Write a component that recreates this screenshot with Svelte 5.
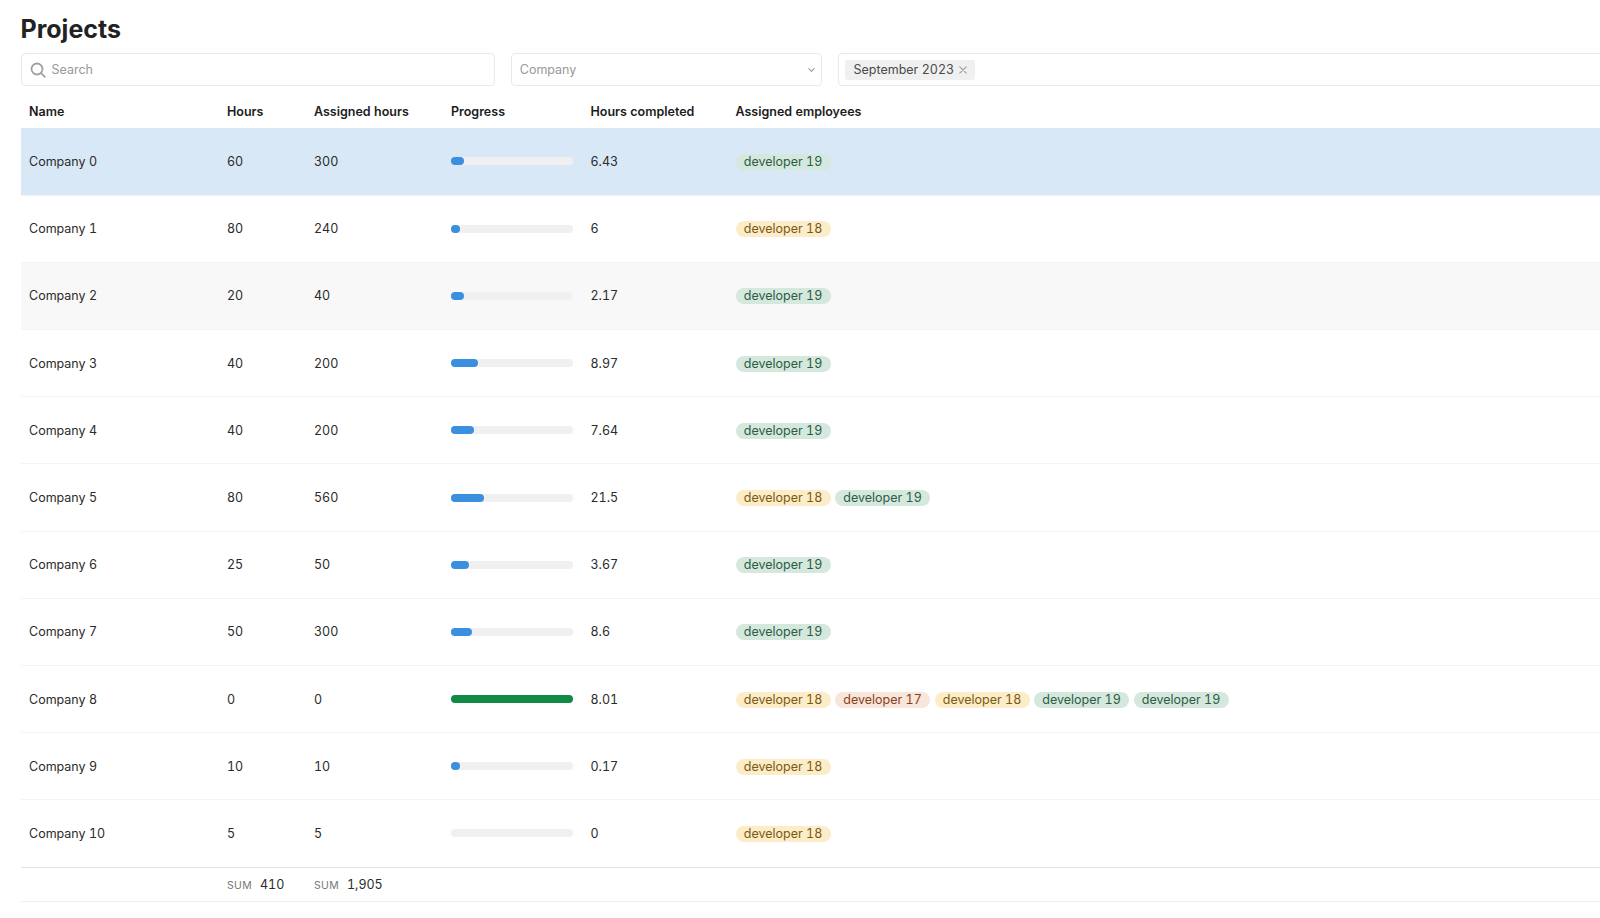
<script lang="ts">
  type Dev = { name: string; tone: "green" | "yellow" | "red" };

  const d19: Dev = { name: "developer 19", tone: "green" };
  const d18: Dev = { name: "developer 18", tone: "yellow" };
  const d17: Dev = { name: "developer 17", tone: "red" };

  const rows = [
    { name: "Company 0", hours: 60, assigned: 300, done: 6.43, devs: [d19] },
    { name: "Company 1", hours: 80, assigned: 240, done: 6, devs: [d18] },
    { name: "Company 2", hours: 20, assigned: 40, done: 2.17, devs: [d19] },
    { name: "Company 3", hours: 40, assigned: 200, done: 8.97, devs: [d19] },
    { name: "Company 4", hours: 40, assigned: 200, done: 7.64, devs: [d19] },
    { name: "Company 5", hours: 80, assigned: 560, done: 21.5, devs: [d18, d19] },
    { name: "Company 6", hours: 25, assigned: 50, done: 3.67, devs: [d19] },
    { name: "Company 7", hours: 50, assigned: 300, done: 8.6, devs: [d19] },
    { name: "Company 8", hours: 0, assigned: 0, done: 8.01, devs: [d18, d17, d18, d19, d19] },
    { name: "Company 9", hours: 10, assigned: 10, done: 0.17, devs: [d18] },
    { name: "Company 10", hours: 5, assigned: 5, done: 0, devs: [d18] },
  ];

  function pct(r: { hours: number; done: number }) {
    if (r.hours === 0) return r.done > 0 ? 100 : 0;
    return (r.done / r.hours) * 100;
  }
</script>

<div class="page">
  <h1>Projects</h1>

  <div class="filters">
    <label class="field search">
      <svg viewBox="0 0 16 16" width="16" height="16" fill="none" stroke="#a0a0a0" stroke-width="1.8" stroke-linecap="round"><circle cx="7" cy="7" r="5.5"/><line x1="11.2" y1="11.2" x2="14.8" y2="14.8"/></svg>
      <span class="placeholder">Search</span>
    </label>
    <div class="field select">
      <span class="placeholder">Company</span>
      <svg viewBox="0 0 10 6" width="7" height="4" fill="none" stroke="#999" stroke-width="1.6" stroke-linecap="round" stroke-linejoin="round"><path d="M1 1l4 4 4-4"/></svg>
    </div>
    <div class="field period">
      <span class="tag">
        September 2023
        <svg viewBox="0 0 10 10" width="8" height="8" fill="none" stroke="#999" stroke-width="1.3" stroke-linecap="round"><path d="M1 1l8 8M9 1l-8 8"/></svg>
      </span>
    </div>
  </div>

  <table>
    <colgroup>
      <col class="c-name" />
      <col class="c-hours" />
      <col class="c-assigned" />
      <col class="c-progress" />
      <col class="c-done" />
      <col />
    </colgroup>
    <thead>
      <tr>
        <th>Name</th>
        <th>Hours</th>
        <th>Assigned hours</th>
        <th>Progress</th>
        <th>Hours completed</th>
        <th>Assigned employees</th>
      </tr>
    </thead>
    <tbody>
      {#each rows as r, i}
        <tr class:selected={i === 0} class:hovered={i === 2}>
          <td>{r.name}</td>
          <td>{r.hours}</td>
          <td>{r.assigned}</td>
          <td>
            <div class="track">
              {#if r.done > 0}
                <div class="fill" class:full={pct(r) >= 100} style="width: {Math.min(pct(r), 100)}%"></div>
              {/if}
            </div>
          </td>
          <td>{r.done}</td>
          <td>
            <div class="pills">
              {#each r.devs as d}
                <span class="pill {d.tone}">{d.name}</span>
              {/each}
            </div>
          </td>
        </tr>
      {/each}
    </tbody>
    <tfoot>
      <tr>
        <td></td>
        <td><span class="sum">sum</span>410</td>
        <td><span class="sum">sum</span>1,905</td>
        <td></td>
        <td></td>
        <td></td>
      </tr>
    </tfoot>
  </table>
</div>

<style>
  :global(body) {
    margin: 0;
    background: #fff;
    overflow: hidden;
  }

  .page {
    width: 1700px;
    box-sizing: border-box;
    padding: 14px 0 0 20.5px;
    font-family: Inter, "Liberation Sans", sans-serif;
    font-size: 12.5px;
    font-variant-numeric: tabular-nums;
    color: #2b2b2b;
  }

  h1 {
    margin: 0 0 9px;
    font-size: 25px;
    line-height: 30px;
    font-weight: 700;
    color: #222;
  }

  .filters {
    display: flex;
    gap: 16.25px;
  }

  .field {
    display: flex;
    align-items: center;
    box-sizing: border-box;
    height: 33px;
    padding: 0 8px;
    border: 1px solid #e9e9e9;
    border-radius: 4px;
    background: #fff;
  }

  .search {
    width: 474px;
    gap: 6px;
  }

  .select {
    width: 311px;
    justify-content: space-between;
    padding-right: 6px;
  }

  .period {
    flex: 1;
    padding: 0 6px;
  }

  .placeholder {
    color: #999;
  }

  .tag {
    display: inline-flex;
    align-items: center;
    gap: 5px;
    height: 20px;
    padding: 0 8px 0 8.5px;
    border-radius: 3px;
    background: #f0f0f0;
    color: #4a4a4a;
  }

  table {
    width: 100%;
    table-layout: fixed;
    border-collapse: collapse;
  }

  .c-name { width: 198px; }
  .c-hours { width: 87px; }
  .c-assigned { width: 137px; }
  .c-progress { width: 139.5px; }
  .c-done { width: 145px; }

  th {
    height: 42px;
    padding: 8px 8px 0 8.5px;
    box-sizing: border-box;
    text-align: left;
    font-weight: 600;
    color: #1c1c1c;
  }

  tbody td {
    height: 67.2px;
    box-sizing: border-box;
    padding: 0 8px 0 8.5px;
    border-bottom: 1px solid #f3f3f3;
  }

  tbody tr:last-child td {
    border-bottom-color: #e3e3e3;
  }

  tr.selected td {
    background: #d8e8f6;
  }

  tr.hovered td {
    background: #f8f8f8;
  }

  .track {
    width: 122px;
    height: 8px;
    border-radius: 4px;
    background: #f0f0f0;
  }

  .fill {
    height: 100%;
    min-width: 9px;
    border-radius: 4px;
    background: #3a8fdf;
  }

  .fill.full {
    background: #118a45;
  }

  .pills {
    display: flex;
    gap: 4.5px;
    padding-top: 1px;
  }

  .pill {
    height: 16px;
    line-height: 16px;
    padding: 0 8.25px;
    border-radius: 8px;
    white-space: nowrap;
  }

  .pill.green { background: #d5e8dd; color: #2d5c46; }
  .pill.yellow { background: #fdecc8; color: #7a5a12; }
  .pill.red { background: #f9e6da; color: #88421a; }

  tfoot td {
    height: 34px;
    box-sizing: border-box;
    padding: 0 8px 0 8.5px;
    border-bottom: 1px solid #f0f0f0;
  }

  .sum {
    margin-right: 8px;
    font-size: 10.5px;
    letter-spacing: 0.3px;
    text-transform: uppercase;
    color: #777;
  }
</style>
